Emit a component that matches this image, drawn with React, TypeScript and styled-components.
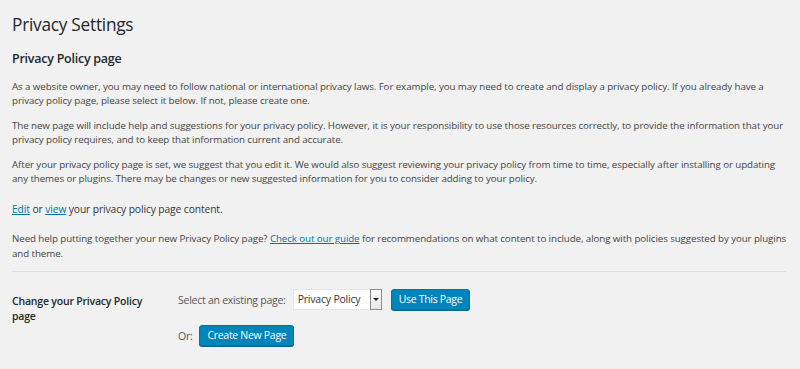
import styled, { createGlobalStyle } from "styled-components";

const Global = createGlobalStyle`
  html, body {
    margin: 0;
    padding: 0;
    background: #f1f1f1;
  }
  body {
    font-family: "Open Sans", "Noto Sans", sans-serif;
    color: #444;
  }
`;

const Wrap = styled.div`
  padding: 14px 14px 20px 12px;
`;

const Title = styled.h1`
  margin: 0;
  font-size: 17.25px;
  font-weight: 400;
  line-height: 22px;
  letter-spacing: -0.25px;
  color: #23282d;
`;

const Section = styled.h2`
  margin: 13.5px 0 0;
  font-size: 12.5px;
  font-weight: 600;
  line-height: 17px;
  letter-spacing: -0.25px;
  color: #23282d;
`;

const Para = styled.p<{ $gap?: number; $dark?: boolean }>`
  margin: ${(p) => p.$gap ?? 9.8}px 0 0;
  font-size: ${(p) => (p.$dark ? 10.25 : 9.75)}px;
  line-height: 14.6px;
  letter-spacing: -0.09px;
  white-space: nowrap;
  color: ${(p) => (p.$dark ? "#32373c" : "#444")};
`;

const Link = styled.a`
  color: #0073aa;
  text-decoration: underline;
  cursor: pointer;
`;

const Rule = styled.hr`
  margin: 9.5px 0 0;
  border: 0;
  border-top: 1px solid #ddd;
`;

const Form = styled.div`
  display: grid;
  grid-template-columns: 166px 1fr;
  padding-top: 17px;
`;

const Label = styled.div`
  padding-top: 5px;
  width: 140px;
  font-size: 10.5px;
  font-weight: 600;
  line-height: 14.5px;
  letter-spacing: -0.2px;
  color: #23282d;
`;

const Fields = styled.div`
  display: flex;
  flex-direction: column;
  gap: 15px;
`;

const FieldRow = styled.div`
  display: flex;
  align-items: center;
  height: 21px;
`;

const FieldText = styled.span`
  font-size: 10.5px;
  letter-spacing: -0.25px;
  color: #555;
`;

const Select = styled.div`
  display: flex;
  align-items: stretch;
  width: 89px;
  height: 21px;
  margin-left: 7px;
  background: #fff;
  border: 1px solid #e6e6e6;
  box-sizing: border-box;
`;

const SelectValue = styled.span`
  flex: 1;
  padding-left: 4px;
  font-size: 10.5px;
  line-height: 19px;
  letter-spacing: -0.2px;
  color: #32373c;
`;

const Arrow = styled.span`
  width: 12px;
  margin: -1px -1px -1px 0;
  border: 1px solid #8c8c8c;
  box-sizing: border-box;
  background: linear-gradient(#fafafa, #e8e8e8);
  display: flex;
  align-items: center;
  justify-content: center;
  &::after {
    content: "";
    border-left: 3px solid transparent;
    border-right: 3px solid transparent;
    border-top: 3px solid #222;
  }
`;

const Button = styled.button<{ $ml?: number }>`
  margin-left: ${(p) => p.$ml ?? 0}px;
  height: 21px;
  padding: 0 7px;
  border: 1px solid #0073aa;
  border-radius: 3px;
  background: #0085ba;
  box-shadow: 0 1px 0 #006799;
  color: #fff;
  font-family: "Open Sans", "Noto Sans", sans-serif;
  font-size: 10.5px;
  letter-spacing: -0.3px;
  line-height: 19px;
  cursor: pointer;
`;

export default function App() {
  return (
    <Wrap>
      <Global />
      <Title>Privacy Settings</Title>
      <Section>Privacy Policy page</Section>
      <Para $gap={13.3}>
        As a website owner, you may need to follow national or international privacy laws. For example, you may need to create and display a privacy policy. If you already have a
        <br />
        privacy policy page, please select it below. If not, please create one.
      </Para>
      <Para>
        The new page will include help and suggestions for your privacy policy. However, it is your responsibility to use those resources correctly, to provide the information that your
        <br />
        privacy policy requires, and to keep that information current and accurate.
      </Para>
      <Para>
        After your privacy policy page is set, we suggest that you edit it. We would also suggest reviewing your privacy policy from time to time, especially after installing or updating
        <br />
        any themes or plugins. There may be changes or new suggested information for you to consider adding to your policy.
      </Para>
      <Para $gap={15.4} $dark>
        <Link>Edit</Link> or <Link>view</Link> your privacy policy page content.
      </Para>
      <Para $gap={15.4}>
        Need help putting together your new Privacy Policy page? <Link>Check out our guide</Link> for recommendations on what content to include, along with policies suggested by your plugins
        <br />
        and theme.
      </Para>
      <Rule />
      <Form>
        <Label>Change your Privacy Policy page</Label>
        <Fields>
          <FieldRow>
            <FieldText>Select an existing page:</FieldText>
            <Select>
              <SelectValue>Privacy Policy</SelectValue>
              <Arrow />
            </Select>
            <Button $ml={9}>Use This Page</Button>
          </FieldRow>
          <FieldRow>
            <FieldText>Or:</FieldText>
            <Button $ml={7}>Create New Page</Button>
          </FieldRow>
        </Fields>
      </Form>
    </Wrap>
  );
}
